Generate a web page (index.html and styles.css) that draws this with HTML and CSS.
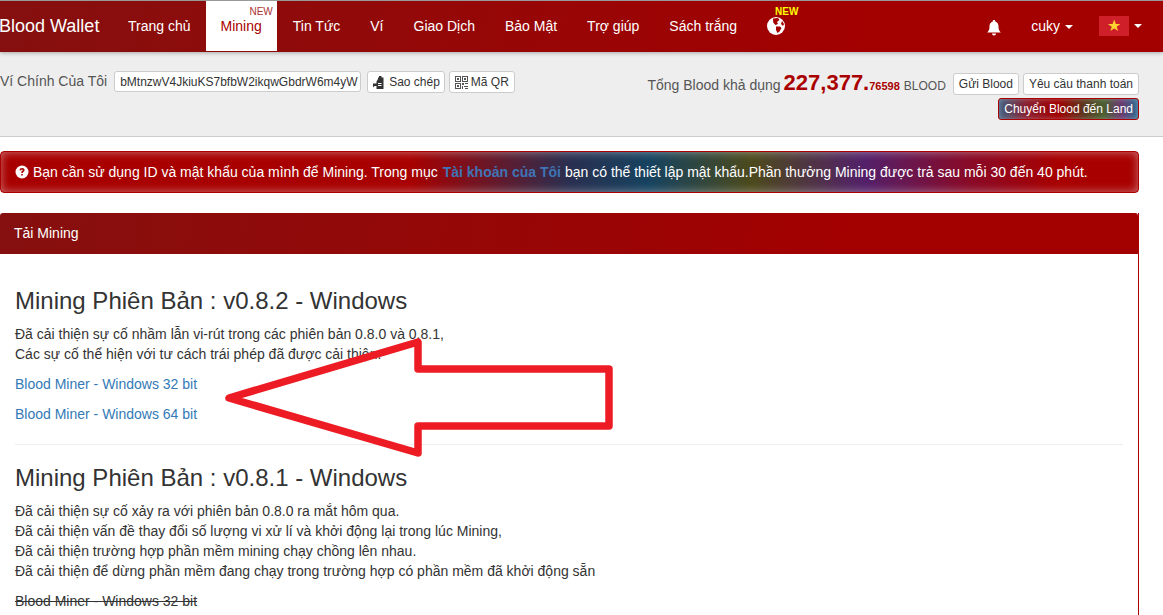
FILE: index.html
```html
<!DOCTYPE html>
<html lang="vi">
<head>
<meta charset="utf-8">
<title>Blood Wallet</title>
<link rel="stylesheet" href="styles.css">
</head>
<body>
<nav class="navbar">
  <a class="brand">Blood Wallet</a>
  <ul class="nav">
    <li><a>Trang chủ</a></li>
    <li class="active"><a>Mining</a><span class="new new-red">NEW</span></li>
    <li><a>Tin Tức</a></li>
    <li><a>Ví</a></li>
    <li><a>Giao Dịch</a></li>
    <li><a>Bảo Mật</a></li>
    <li><a>Trợ giúp</a></li>
    <li><a>Sách trắng</a></li>
    <li class="globe-item">
      <a><svg class="globe" viewBox="0 0 18 18"><circle cx="9" cy="9" r="9" fill="#fff"/><path d="M6 1.500 11 1 12.500 3 10 5 11 7 8.500 8 6.500 6 6 3.500ZM9 9.500 13 9.500 14.500 11 12.500 14.500 10.500 16 9 13ZM15 4 17 7 16 9 14 7Z" fill="#a30000"/></svg></a>
      <span class="new new-yellow">NEW</span>
    </li>
  </ul>
  <ul class="nav nav-right">
    <li class="bell-item"><a><svg class="bell" viewBox="0 0 14 16"><path d="M7 0a1.200 1.200 0 0 1 1.200 1.500C10.500 2 11.500 4 11.500 6.500c0 3 .7 4.500 2.300 6H.2c1.600-1.500 2.300-3 2.300-6C2.500 4 3.500 2 5.800 1.500A1.200 1.200 0 0 1 7 0ZM5 13.500h4a2 2 0 0 1-4 0Z" fill="#fff"/></svg></a></li>
    <li class="user-item"><a>cuky<span class="caret"></span></a></li>
    <li class="flag-item"><a><span class="flag">★</span><span class="caret"></span></a></li>
  </ul>
</nav>

<header class="wallet-bar">
  <div class="wallet-left">
    <span class="wallet-label">Ví Chính Của Tôi</span>
    <span class="btn address">bMtnzwV4JkiuKS7bfbW2ikqwGbdrW6m4yW</span>
    <a class="btn btn-copy"><svg class="ico" viewBox="0 0 13 13"><path d="M6 0h2.500v1.500H10.500V13H3.500V10H1.500L0 11.500V7.500H4L3.500 9H3.500V5.500L5 3V1.500H6Z" fill="#333"/><path d="M5 7h3.500v1H5ZM5 9h3.500v1H5Z" fill="#fff"/></svg>Sao chép</a>
    <a class="btn"><svg class="ico" viewBox="0 0 13 13"><path d="M0 0h6v6H0ZM1 1v4h4V1ZM2 2h2v2H2ZM7 0h6v6H7ZM8 1v4h4V1ZM9 2h2v2H9ZM0 7h6v6H0ZM1 8v4h4V8ZM2 9h2v2H2ZM7 7h2v2H7ZM10 7h3v1h-3ZM7 10h1v3H7ZM9 10h4v1H9ZM10 12h3v1h-3Z" fill="#555" fill-rule="evenodd"/></svg>Mã QR</a>
  </div>
  <div class="wallet-right">
    <div class="wallet-row">
      <span class="total-label">Tổng Blood khả dụng</span>
      <strong class="amount">227,377.</strong><strong class="decimals">76598</strong>
      <span class="unit">BLOOD</span>
      <a class="btn btn-gap">Gửi Blood</a>
      <a class="btn">Yêu cầu thanh toán</a>
    </div>
    <a class="btn btn-land">Chuyển Blood đến Land</a>
  </div>
</header>

<main class="content">
  <div class="alert">
    <svg class="help" viewBox="0 0 14 14"><circle cx="7" cy="7" r="6.500" fill="#fff"/><path d="M4.500 5.300C4.600 3.800 5.600 3 7.100 3c1.500 0 2.500.9 2.500 2.100 0 1.800-1.800 1.800-1.800 3H6.200C6.200 6 7.800 6 7.800 5.100c0-.4-.3-.7-.8-.7s-.8.4-.9 1ZM6.200 9h1.600v1.600H6.200Z" fill="#a80000"/></svg>
    <span>Bạn cần sử dụng ID và mật khẩu của mình để Mining. Trong mục</span>
    <a class="alert-link">Tài khoản của Tôi</a>
    <span>bạn có thể thiết lập mật khẩu.Phần thưởng Mining được trả sau mỗi 30 đến 40 phút.</span>
  </div>

  <section class="panel">
    <div class="panel-heading">Tải Mining</div>
    <div class="panel-body">
      <h3>Mining Phiên Bản : v0.8.2 - Windows</h3>
      <p>Đã cải thiện sự cố nhầm lẫn vi-rút trong các phiên bản 0.8.0 và 0.8.1,<br>Các sự cố thể hiện với tư cách trái phép đã được cải thiện.</p>
      <p class="dl"><a>Blood Miner - Windows 32 bit</a></p>
      <p class="dl"><a>Blood Miner - Windows 64 bit</a></p>
      <hr>
      <h3>Mining Phiên Bản : v0.8.1 - Windows</h3>
      <p>Đã cải thiện sự cố xảy ra với phiên bản 0.8.0 ra mắt hôm qua.<br>Đã cải thiện vấn đề thay đổi số lượng vi xử lí và khởi động lại trong lúc Mining,<br>Đã cải thiện trường hợp phần mềm mining chạy chồng lên nhau.<br>Đã cải thiện để dừng phần mềm đang chạy trong trường hợp có phần mềm đã khởi động sẵn</p>
      <p class="dl"><s>Blood Miner - Windows 32 bit</s></p>
    </div>
  </section>
</main>

<svg class="arrow" viewBox="0 0 1163 615"><path d="M229 398 418 342V369H609V426H418V453Z" fill="none" stroke="#ed1c24" stroke-width="7.500" stroke-linejoin="round"/></svg>
</body>
</html>
```

FILE: styles.css
```css
* { box-sizing: border-box; }
html, body { height: 615px; overflow: hidden; }
body {
  margin: 0;
  background: #fff;
  color: #333;
  font: 14px/20px "Liberation Sans", Arial, sans-serif;
  position: relative;
}
a { text-decoration: none; cursor: pointer; }

.navbar {
  display: flex;
  height: 52px;
  border-top: 1px solid #999;
  background: linear-gradient(100deg, #85100f 0%, #a30000 75%);
  box-shadow: 0 1px 4px rgba(0,0,0,.3);
  position: relative;
  color: #fff;
}
.brand {
  font-size: 18px;
  line-height: 50px;
  width: 114px;
  margin-left: -1px;
  flex: none;
}
.nav { display: flex; list-style: none; margin: 0; padding: 0; }
.nav li { position: relative; }
.nav a { display: block; padding: 15px; line-height: 20px; color: #fff; height: 50px; }
.nav .active { margin-right: 1px; }
.nav .active a { background: #fff; color: #a00; }
.new { position: absolute; font-size: 10px; line-height: 12px; top: 5px; }
.new-red { right: 0; color: #a33; padding-right: 4px; }
.new-yellow { left: 23px; color: #ff0; font-weight: bold; }
.globe { width: 18px; height: 18px; display: block; margin-top: 1px; }
.nav-right { margin-left: auto; }
.bell { width: 14px; height: 16px; display: block; margin-top: 4px; }
.user-item a { padding: 15px 11px 15px 15px; }
.flag-item { padding-left: 15px; padding-right: 21px; }
.flag-item a { padding: 15px 0; display: flex; align-items: center; height: 50px; }
.flag {
  display: block;
  width: 30px;
  height: 20px;
  background: #cf2029;
  color: #ffd530;
  font-size: 16px;
  line-height: 20px;
  text-align: center;
}
.caret {
  display: inline-block;
  width: 0;
  height: 0;
  margin-left: 5px;
  vertical-align: middle;
  border-top: 4px solid #fff;
  border-left: 4px solid transparent;
  border-right: 4px solid transparent;
}

.wallet-bar {
  display: flex;
  justify-content: space-between;
  height: 85px;
  padding: 19px 24px 0 0;
  background: #eee;
  border-bottom: 1px solid #ccc;
}
.wallet-left { display: flex; align-items: flex-start; gap: 4px; }
.wallet-label { margin-right: 3px; line-height: 21px; color: #555; }
.btn {
  display: inline-flex;
  align-items: center;
  height: 22px;
  padding: 0 5px;
  background: #fff;
  border: 1px solid #ccc;
  border-radius: 3px;
  font-size: 12px;
  line-height: 18px;
  color: #333;
  white-space: nowrap;
}
.address { width: 247px; height: 21px; margin-right: 2px; }
.btn-copy { padding-right: 4px; }
.ico { width: 13px; height: 13px; margin-right: 3px; }
.wallet-right { display: flex; flex-direction: column; align-items: flex-end; gap: 4px; }
.wallet-row { display: flex; align-items: baseline; height: 23px; padding-top: 2px; }
.total-label { color: #555; margin-right: 3px; }
.amount { font-size: 22px; color: #a00; }
.decimals { font-size: 11px; color: #a00; margin-right: 4px; }
.unit { font-size: 12px; color: #555; margin-right: 7px; }
.btn-gap { margin-right: 4px; }
.wallet-row .btn { align-self: flex-start; }
.btn-land {
  color: #fff;
  border-color: #a00;
  background: linear-gradient(90deg, #3f5f80 0%, #8a2030 20%, #a00000 42%, #5a3a20 62%, #4a6030 75%, #6a3a70 88%, #2a6a90 100%);
  box-shadow: inset 0 0 5px rgba(255,255,255,.35);
}

.content { padding: 14px 24px 0 0; }
.alert {
  display: flex;
  align-items: center;
  gap: 4px;
  height: 42px;
  padding: 0 14px;
  color: #fff;
  border: 1px solid #a00;
  border-radius: 4px;
  white-space: nowrap;
  background: linear-gradient(90deg, #a80000 36%, #2a2f50 50%, #164360 57%, #4c4a1c 66%, #53206a 76%, #880a28 85%, #a80000 93%);
  box-shadow: inset 0 0 10px rgba(255,255,255,.45);
}
.help { width: 14px; height: 14px; flex: none; }
.alert-link { color: #3f74b5; font-weight: bold; margin-left: 1px; }

.panel { margin-top: 20px; border-right: 1px solid #a00; height: 500px; }
.panel-heading {
  height: 41px;
  padding: 10px 14px;
  color: #fff;
  border-radius: 3px 3px 0 0;
  background: linear-gradient(100deg, #85100f 0%, #a30000 75%);
}
.panel-body { padding: 30px 15px 0; }
h3 { margin: 0 0 6px; font-weight: 400; font-size: 24px; line-height: 34px; color: #333; }
p { margin: 0 0 10px; }
.dl a { color: #337ab7; }
hr { border: 0; border-top: 1px solid #eee; margin: 20px 0 16px; }

.arrow { position: absolute; left: 0; top: 0; width: 1163px; height: 615px; pointer-events: none; }
```
